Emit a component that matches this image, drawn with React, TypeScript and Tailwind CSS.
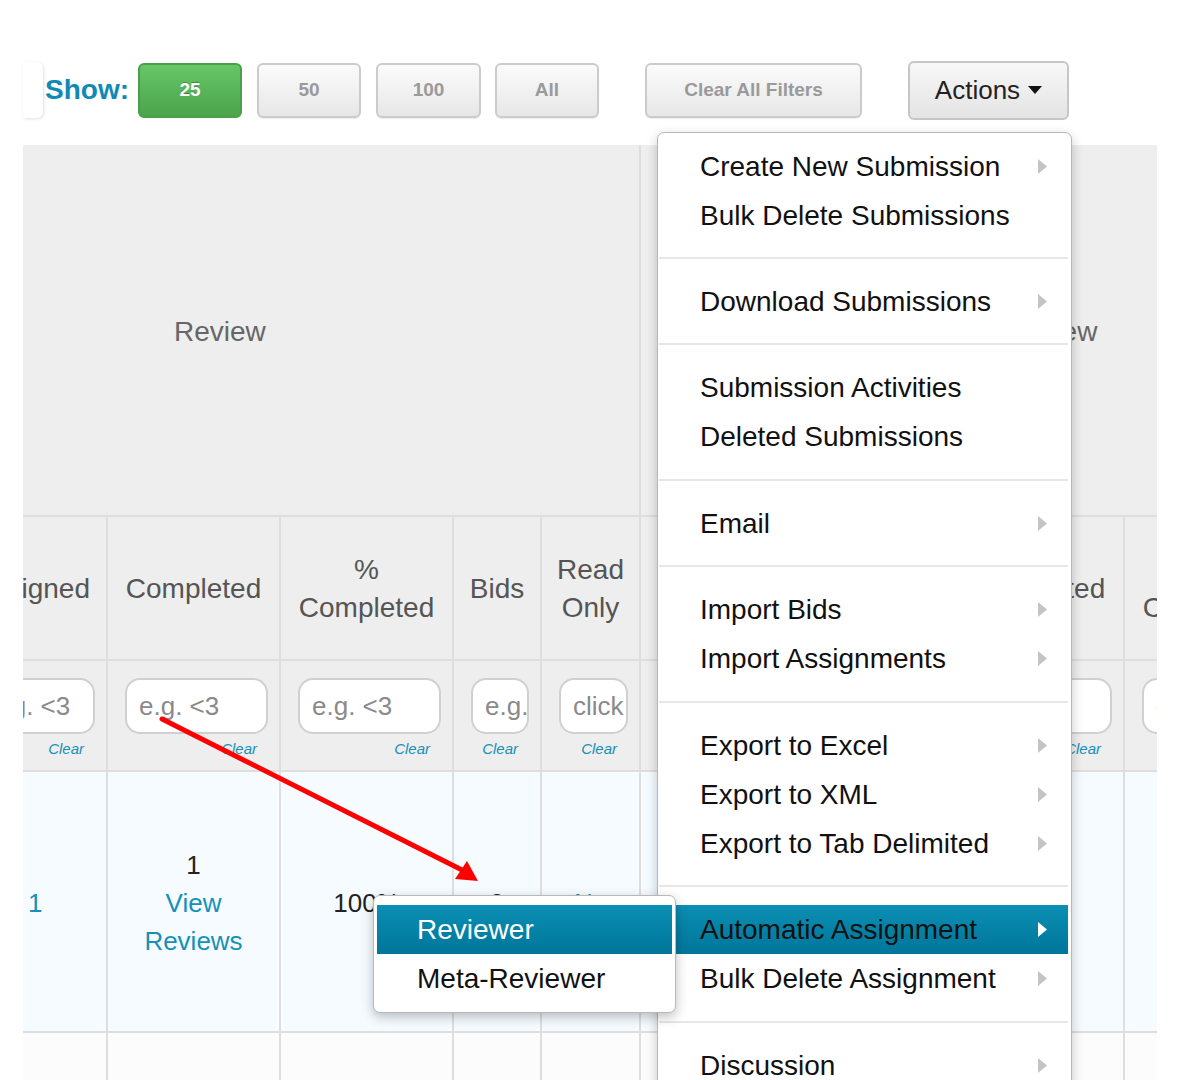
import React from "react";

const FONT = { fontFamily: '"Liberation Sans", Helvetica, Arial, sans-serif' };

function Arrow({ white = false }: { white?: boolean }) {
  return (
    <svg width="9" height="15" viewBox="0 0 9 15" className="shrink-0">
      <path d="M0 0 L9 7.5 L0 15 Z" fill={white ? "#ffffff" : "#c4c4c4"} />
    </svg>
  );
}

function MenuItem({ label, arrow = false, active = false }: { label: string; arrow?: boolean; active?: boolean }) {
  return (
    <div
      className={
        "flex h-[49px] items-center justify-between pl-[41px] pr-[21px] text-[28px] leading-none text-[#111] " +
        (active ? "bg-gradient-to-b from-[#0b8fb3] to-[#00769a]" : "")
      }
    >
      <span className="whitespace-nowrap">{label}</span>
      {arrow ? <Arrow white={active} /> : null}
    </div>
  );
}

function Divider() {
  return <div className="h-[2px] bg-[#e6e6e6]" />;
}

function GrayBtn({ label, w, ml }: { label: string; w: string; ml: string }) {
  return (
    <div
      className={
        "flex h-[55px] items-center justify-center rounded-[6px] border-2 border-[#cbcbcb] bg-gradient-to-b from-[#fbfbfb] to-[#e7e7e7] text-[19px] font-bold text-[#9a9a9a] shadow-[0_1px_1px_rgba(0,0,0,0.08)] " +
        w +
        " " +
        ml
      }
    >
      {label}
    </div>
  );
}

function FilterCell({ text, first = false }: { text: string; first?: boolean }) {
  return (
    <div className="flex h-[111px] flex-col border-b-2 border-r-2 border-[#dedede] bg-[#eeeeee] pt-[17px] overflow-hidden">
      <div className={"flex pr-[11px] " + (first ? "justify-end" : "pl-[17px]")}>
        <div
          className={
            "flex h-[56px] items-center overflow-hidden whitespace-nowrap rounded-[15px] border-2 border-[#d0d0d0] bg-white pl-[12px] text-[26px] text-[#8a8a8a] " +
            (first ? "w-[119px] shrink-0" : "w-full")
          }
        >
          {text}
        </div>
      </div>
      <div className="mt-[4px] pr-[22px] text-right text-[15px] italic text-[#1790b8]">Clear</div>
    </div>
  );
}

function HeadCell({ children, first = false }: { children: React.ReactNode; first?: boolean }) {
  return (
    <div
      className={
        "flex h-[144px] items-center overflow-hidden whitespace-nowrap border-b-2 border-r-2 border-[#dedede] bg-[#eeeeee] pt-[2px] text-center text-[28px] leading-[38px] text-[#555] " +
        (first ? "justify-end pr-[16px]" : "justify-center")
      }
    >
      {children}
    </div>
  );
}

function DataCell({ children, cls = "" }: { children?: React.ReactNode; cls?: string }) {
  return (
    <div
      className={
        "flex h-[261px] items-center justify-center border-b-2 border-r-2 border-[#dedede] bg-[#f5fbff] pt-[2px] text-center text-[26px] leading-[38px] text-[#222] " +
        cls
      }
    >
      {children}
    </div>
  );
}

function EmptyCell() {
  return <div className="h-[80px] border-r-2 border-[#dedede] bg-[#fcfcfc]" />;
}

export default function App() {
  return (
    <div className="relative h-[1080px] w-[1177px] overflow-hidden bg-white" style={FONT}>
      {/* toolbar */}
      <div className="flex h-[58px] items-center pl-[23px] mt-[61px]">
        <div className="h-[56px] w-[20px] rounded-r-[6px] bg-white shadow-[1px_1px_3px_rgba(0,0,0,0.12)]" />
        <div className="ml-[2px] text-[28px] font-bold text-[#0f8ab5]">Show:</div>
        <div className="ml-[9px] flex h-[55px] w-[104px] items-center justify-center rounded-[6px] border-2 border-[#4c9d4c] bg-gradient-to-b from-[#67c567] to-[#4ba54b] text-[19px] font-bold text-white [text-shadow:0_-1px_0_rgba(0,0,0,0.25)]">
          25
        </div>
        <GrayBtn label="50" w="w-[104px]" ml="ml-[15px]" />
        <GrayBtn label="100" w="w-[105px]" ml="ml-[15px]" />
        <GrayBtn label="All" w="w-[104px]" ml="ml-[14px]" />
        <GrayBtn label="Clear All Filters" w="w-[217px]" ml="ml-[46px]" />
        <div className="ml-[46px] flex h-[59px] w-[161px] items-center justify-center gap-[8px] rounded-[6px] border-2 border-[#c6c6c6] bg-gradient-to-b from-[#f7f7f7] to-[#e4e4e4] text-[26px] text-[#222]">
          <span>Actions</span>
          <svg width="14" height="8" viewBox="0 0 14 8">
            <path d="M0 0 L14 0 L7 8 Z" fill="#111" />
          </svg>
        </div>
      </div>

      {/* table */}
      <div className="ml-[23px] mt-[26px] w-[1134px] overflow-hidden">
        <div className="grid w-[1275px] grid-cols-[85px_173px_173px_88px_99px_311px_173px_173px]">
          {/* group header row */}
          <div className="col-span-5 flex h-[372px] items-center border-b-2 border-r-2 border-[#dedede] bg-[#eeeeee] pl-[151px] pt-[4px] text-[28px] text-[#666]">
            Review
          </div>
          <div className="col-span-3 flex h-[372px] items-center border-b-2 border-[#dedede] bg-[#eeeeee] pl-[293px] pt-[4px] text-[28px] text-[#666]">
            Meta-Review
          </div>

          {/* column headers */}
          <HeadCell first>Assigned</HeadCell>
          <HeadCell>Completed</HeadCell>
          <HeadCell>
            <span>
              %<br />
              Completed
            </span>
          </HeadCell>
          <HeadCell>Bids</HeadCell>
          <HeadCell>
            <span>
              Read
              <br />
              Only
            </span>
          </HeadCell>
          <HeadCell>Assigned</HeadCell>
          <HeadCell>Completed</HeadCell>
          <HeadCell>
            <span>
              %<br />
              Completed
            </span>
          </HeadCell>

          {/* filter row */}
          <FilterCell text="e.g. <3" first />
          <FilterCell text="e.g. <3" />
          <FilterCell text="e.g. <3" />
          <FilterCell text="e.g. <3" />
          <FilterCell text="click to filter" />
          <FilterCell text="e.g. <3" />
          <FilterCell text="e.g. <3" />
          <FilterCell text="e.g. <3" />

          {/* data row */}
          <DataCell cls="justify-start pl-[5px] text-[#1790b8]">1</DataCell>
          <DataCell>
            <div>
              <div className="text-[#222]">1</div>
              <div className="text-[#1790b8]">View</div>
              <div className="text-[#1790b8]">Reviews</div>
            </div>
          </DataCell>
          <DataCell>100%</DataCell>
          <DataCell>0</DataCell>
          <DataCell cls="text-[#1790b8]">No</DataCell>
          <DataCell />
          <DataCell />
          <DataCell />

          <EmptyCell />
          <EmptyCell />
          <EmptyCell />
          <EmptyCell />
          <EmptyCell />
          <EmptyCell />
          <EmptyCell />
          <EmptyCell />
        </div>
      </div>

      {/* red annotation arrow */}
      <svg className="pointer-events-none absolute left-0 top-0 z-10" width="1177" height="1080">
        <line x1="162" y1="719" x2="466" y2="872" stroke="#ff0000" strokeWidth="5" strokeLinecap="round" />
        <path d="M478 881 L455 879 L467 861 Z" fill="#ff0000" />
      </svg>

      {/* Actions dropdown */}
      <div className="absolute left-[657px] top-[132px] z-20 h-[980px] w-[415px] rounded-t-[7px] border border-[#b8b8b8] bg-white pl-[1px] pr-[3px] shadow-[0_4px_12px_rgba(0,0,0,0.22)]">
        <div className="pt-[9px] pb-[17px]">
          <MenuItem label="Create New Submission" arrow />
          <MenuItem label="Bulk Delete Submissions" />
        </div>
        <Divider />
        <div className="pt-[18px] pb-[17px]">
          <MenuItem label="Download Submissions" arrow />
        </div>
        <Divider />
        <div className="py-[18px]">
          <MenuItem label="Submission Activities" />
          <MenuItem label="Deleted Submissions" />
        </div>
        <Divider />
        <div className="pt-[18px] pb-[17px]">
          <MenuItem label="Email" arrow />
        </div>
        <Divider />
        <div className="py-[18px]">
          <MenuItem label="Import Bids" arrow />
          <MenuItem label="Import Assignments" arrow />
        </div>
        <Divider />
        <div className="pt-[18px] pb-[17px]">
          <MenuItem label="Export to Excel" arrow />
          <MenuItem label="Export to XML" arrow />
          <MenuItem label="Export to Tab Delimited" arrow />
        </div>
        <Divider />
        <div className="py-[18px]">
          <MenuItem label="Automatic Assignment" arrow active />
          <MenuItem label="Bulk Delete Assignment" arrow />
        </div>
        <Divider />
        <div className="py-[18px]">
          <MenuItem label="Discussion" arrow />
        </div>
      </div>

      {/* submenu */}
      <div className="absolute left-[373px] top-[895px] z-30 h-[118px] w-[303px] rounded-[7px] border border-[#b8b8b8] bg-white px-[3px] pt-[9px] shadow-[0_4px_12px_rgba(0,0,0,0.25)]">
        <div className="flex h-[49px] items-center bg-gradient-to-b from-[#0b8fb3] to-[#00769a] pl-[40px] text-[28px] text-white">
          Reviewer
        </div>
        <div className="flex h-[49px] items-center pl-[40px] text-[28px] text-[#111]">Meta-Reviewer</div>
      </div>
    </div>
  );
}
